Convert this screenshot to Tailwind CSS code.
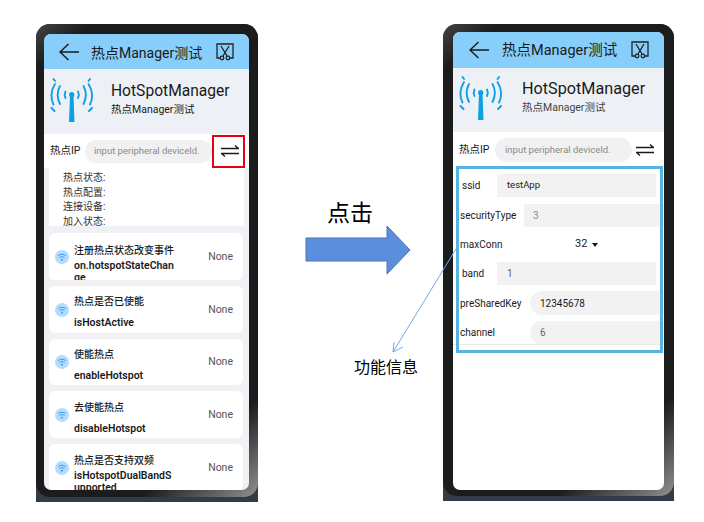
<!DOCTYPE html>
<html lang="en">
<head>
<meta charset="UTF-8">
<title>HotSpotManager</title>
<script src="https://cdn.jsdelivr.net/npm/@tailwindcss/browser@4"></script>
</head>
<body class="bg-white">
<div class="relative w-[704px] h-[522px] overflow-hidden bg-white font-['Roboto','Noto_Sans_CJK_SC',sans-serif] text-[#1a1a1a]">

  <!-- left phone -->
  <div class="absolute left-[36px] top-[24px] w-[222px] h-[478px] rounded-t-[14px] bg-[#333a48]">
    <div class="w-full h-[473px] rounded-[14px] pt-[10px] px-[8px] bg-[linear-gradient(140deg,#444_0%,#1c1c1c_7%,#1c1c1c_85%,#909090_100%)]">
      <div class="w-[205px] h-[456px] rounded-[7px] overflow-hidden bg-[#f1f1f5] flex flex-col">
        <div class="h-[35px] shrink-0 bg-[#87cefa] flex items-center">
          <svg class="ml-[15px] w-[20px] h-[18px]" viewBox="0 0 20 18" fill="none" stroke="#1a1a1a" stroke-width="1.400"><path d="M20 9H1M9.500 1 1 9l8.500 8"/></svg>
          <span class="ml-[12px] pt-[3px] text-[14px] leading-none whitespace-nowrap">热点Manager测试</span>
          <svg class="ml-auto mr-[15px] w-[18px] h-[18px]" viewBox="0 0 18 18" fill="none" stroke="#222" stroke-width="1.300"><path d="M5 15H1V1h16v14h-4"/><path d="M5 3l6 10M13 3 7 13"/><circle cx="6" cy="15" r="1.800"/><circle cx="12" cy="15" r="1.800"/></svg>
        </div>
        <div class="h-[65px] shrink-0 bg-[#edf1f5] flex items-center">
          <svg class="ml-[5px] w-[47px] h-[45px] -mt-[3px]" viewBox="0 0 47 45" fill="none" stroke="#0ea0e4" stroke-width="1.900" stroke-linecap="round"><path d="M21 18h3.500l1 26h-5.500z" fill="#0ea0e4" stroke="none"/><circle cx="22.700" cy="16.700" r="2.600" fill="#0ea0e4" stroke="none"/><path d="M16.500 13.500c-1 2-1 4.500 0 6.500M29 13.500c1 2 1 4.500 0 6.500"/><path d="M11 8c-3 5.500-3 12 0 18M34.500 8c3 5.500 3 12 0 18"/><path d="M6 6C1.500 13 1.500 21 4.500 26.500M39.500 6c4.500 7 4.500 15 1.500 20.500"/><path d="M4.500 1l1.500 2M41 1l-1.500 2M2.500 30l3 3M43 30l-3 3"/></svg>
          <div class="ml-[15px] -mt-[6px]">
            <div class="text-[15.600px] leading-[22px] whitespace-nowrap">HotSpotManager</div>
            <div class="text-[10.500px] leading-[16px] whitespace-nowrap">热点Manager测试</div>
          </div>
        </div>
        <div class="h-[34px] shrink-0 bg-white flex items-center">
          <span class="ml-[6px] w-[35px] text-[10.500px] whitespace-nowrap">热点IP</span>
          <div class="w-[127px] h-[23px] rounded-full bg-[#f1f1f1] flex items-center pl-[9px] text-[9.500px] text-[#8a8a8a] whitespace-nowrap">input peripheral deviceId.</div>
          <svg class="ml-[9px] w-[18px] h-[12px]" viewBox="0 0 18 12" fill="none" stroke="#1a1a1a" stroke-width="1.300"><path d="M0 3.500h17.500L14 .5M18 8.500H.5L4 11.500"/></svg>
        </div>
        <div class="mx-[5px] w-[195px] h-[58px] shrink-0 bg-white pl-[14px] pt-[3px] overflow-hidden text-[10px] leading-[14.500px] text-[#333]">
          <div>热点状态:</div>
          <div>热点配置:</div>
          <div>连接设备:</div>
          <div>加入状态:</div>
        </div>
        <div class="flex flex-col gap-[6px] mt-[7px] mx-[5px] w-[194px]">
          <div class="h-[47px] shrink-0 rounded-[6px] bg-white overflow-hidden flex items-center">
            <svg class="ml-[6px] shrink-0 w-[14px] h-[14px]" viewBox="0 0 14 14" fill="none"><circle cx="7" cy="7" r="7" fill="#b3dcff"/><path d="M3 5.800c2.400-2 5.600-2 8 0M4.500 7.600c1.500-1.200 3.500-1.200 5 0" stroke="#3b9bf5"/><circle cx="7" cy="9.700" r="1" fill="#3b9bf5"/></svg>
            <div class="ml-[5px] mr-[2px] w-[102px] h-[47px] shrink-0 overflow-hidden pt-[11px]">
              <div class="text-[10px] leading-[14px] font-medium whitespace-nowrap">注册热点状态改变事件</div>
              <div class="mt-[2px] text-[10.500px] leading-[12px] font-semibold break-all">on.hotspotStateChange</div>
            </div>
            <span class="ml-auto mr-[10px] text-[10.500px] text-[#555]">None</span>
          </div>
          <div class="h-[47px] shrink-0 rounded-[6px] bg-white overflow-hidden flex items-center">
            <svg class="ml-[6px] shrink-0 w-[14px] h-[14px]" viewBox="0 0 14 14" fill="none"><circle cx="7" cy="7" r="7" fill="#b3dcff"/><path d="M3 5.800c2.400-2 5.600-2 8 0M4.500 7.600c1.500-1.200 3.500-1.200 5 0" stroke="#3b9bf5"/><circle cx="7" cy="9.700" r="1" fill="#3b9bf5"/></svg>
            <div class="ml-[5px] mr-[2px] w-[102px] h-[47px] shrink-0 overflow-hidden pt-[9px]">
              <div class="text-[10px] leading-[14px] font-medium whitespace-nowrap">热点是否已使能</div>
              <div class="mt-[8px] text-[10.500px] leading-[12px] font-semibold break-all">isHostActive</div>
            </div>
            <span class="ml-auto mr-[10px] text-[10.500px] text-[#555]">None</span>
          </div>
          <div class="h-[46px] shrink-0 rounded-[6px] bg-white overflow-hidden flex items-center">
            <svg class="ml-[6px] shrink-0 w-[14px] h-[14px]" viewBox="0 0 14 14" fill="none"><circle cx="7" cy="7" r="7" fill="#b3dcff"/><path d="M3 5.800c2.400-2 5.600-2 8 0M4.500 7.600c1.500-1.200 3.500-1.200 5 0" stroke="#3b9bf5"/><circle cx="7" cy="9.700" r="1" fill="#3b9bf5"/></svg>
            <div class="ml-[5px] mr-[2px] w-[102px] h-[46px] shrink-0 overflow-hidden pt-[9px]">
              <div class="text-[10px] leading-[14px] font-medium whitespace-nowrap">使能热点</div>
              <div class="mt-[8px] text-[10.500px] leading-[12px] font-semibold break-all">enableHotspot</div>
            </div>
            <span class="ml-auto mr-[10px] text-[10.500px] text-[#555]">None</span>
          </div>
          <div class="h-[47px] shrink-0 rounded-[6px] bg-white overflow-hidden flex items-center">
            <svg class="ml-[6px] shrink-0 w-[14px] h-[14px]" viewBox="0 0 14 14" fill="none"><circle cx="7" cy="7" r="7" fill="#b3dcff"/><path d="M3 5.800c2.400-2 5.600-2 8 0M4.500 7.600c1.500-1.200 3.500-1.200 5 0" stroke="#3b9bf5"/><circle cx="7" cy="9.700" r="1" fill="#3b9bf5"/></svg>
            <div class="ml-[5px] mr-[2px] w-[102px] h-[47px] shrink-0 overflow-hidden pt-[10px]">
              <div class="text-[10px] leading-[14px] font-medium whitespace-nowrap">去使能热点</div>
              <div class="mt-[8px] text-[10.500px] leading-[12px] font-semibold break-all">disableHotspot</div>
            </div>
            <span class="ml-auto mr-[10px] text-[10.500px] text-[#555]">None</span>
          </div>
          <div class="h-[47px] shrink-0 rounded-[6px] bg-white overflow-hidden flex items-center">
            <svg class="ml-[6px] shrink-0 w-[14px] h-[14px]" viewBox="0 0 14 14" fill="none"><circle cx="7" cy="7" r="7" fill="#b3dcff"/><path d="M3 5.800c2.400-2 5.600-2 8 0M4.500 7.600c1.500-1.200 3.500-1.200 5 0" stroke="#3b9bf5"/><circle cx="7" cy="9.700" r="1" fill="#3b9bf5"/></svg>
            <div class="ml-[5px] mr-[2px] w-[102px] h-[47px] shrink-0 overflow-hidden pt-[10px]">
              <div class="text-[10px] leading-[14px] font-medium whitespace-nowrap">热点是否支持双频</div>
              <div class="mt-[2px] text-[10.500px] leading-[12px] font-semibold break-all">isHotspotDualBandSupported</div>
            </div>
            <span class="ml-auto mr-[10px] text-[10.500px] text-[#555]">None</span>
          </div>
        </div>
      </div>
    </div>
  </div>

  <!-- red highlight over the swap button -->
  <div class="absolute left-[212px] top-[135px] w-[33px] h-[33px] border-2 border-[#e60012]"></div>

  <!-- right phone -->
  <div class="absolute left-[443px] top-[24px] w-[231px] h-[477px] rounded-t-[14px] bg-[#333a48]">
    <div class="w-full h-[472px] rounded-[14px] pt-[8px] px-[10px] bg-[linear-gradient(140deg,#444_0%,#1c1c1c_7%,#1c1c1c_85%,#909090_100%)]">
      <div class="w-[211px] h-[458px] rounded-[7px] overflow-hidden bg-white flex flex-col">
        <div class="h-[36px] shrink-0 bg-[#87cefa] flex items-center">
          <svg class="ml-[16px] w-[20px] h-[18px]" viewBox="0 0 20 18" fill="none" stroke="#1a1a1a" stroke-width="1.400"><path d="M20 9H1M9.500 1 1 9l8.500 8"/></svg>
          <span class="ml-[13px] pt-[2px] text-[14.500px] leading-none whitespace-nowrap">热点Manager测试</span>
          <svg class="ml-auto mr-[15px] w-[18px] h-[18px]" viewBox="0 0 18 18" fill="none" stroke="#222" stroke-width="1.300"><path d="M5 15H1V1h16v14h-4"/><path d="M5 3l6 10M13 3 7 13"/><circle cx="6" cy="15" r="1.800"/><circle cx="12" cy="15" r="1.800"/></svg>
        </div>
        <div class="h-[64px] shrink-0 bg-[#edf1f5] flex items-center">
          <svg class="ml-[5px] w-[47px] h-[45px] -mt-[3px]" viewBox="0 0 47 45" fill="none" stroke="#0ea0e4" stroke-width="1.900" stroke-linecap="round"><path d="M21 18h3.500l1 26h-5.500z" fill="#0ea0e4" stroke="none"/><circle cx="22.700" cy="16.700" r="2.600" fill="#0ea0e4" stroke="none"/><path d="M16.500 13.500c-1 2-1 4.500 0 6.500M29 13.500c1 2 1 4.500 0 6.500"/><path d="M11 8c-3 5.500-3 12 0 18M34.500 8c3 5.500 3 12 0 18"/><path d="M6 6C1.500 13 1.500 21 4.500 26.500M39.500 6c4.500 7 4.500 15 1.500 20.500"/><path d="M4.500 1l1.500 2M41 1l-1.500 2M2.500 30l3 3M43 30l-3 3"/></svg>
          <div class="ml-[17px] -mt-[6px]">
            <div class="text-[16.200px] leading-[22px] whitespace-nowrap">HotSpotManager</div>
            <div class="text-[10.500px] leading-[16px] whitespace-nowrap text-[#444]">热点Manager测试</div>
          </div>
        </div>
        <div class="h-[36px] shrink-0 flex items-center">
          <span class="ml-[6px] w-[36px] text-[10.500px] whitespace-nowrap">热点IP</span>
          <div class="w-[137px] h-[24px] rounded-full bg-[#f1f1f1] flex items-center pl-[10px] text-[9.500px] text-[#8a8a8a] whitespace-nowrap">input peripheral deviceId.</div>
          <svg class="ml-[4px] w-[18px] h-[12px]" viewBox="0 0 18 12" fill="none" stroke="#1a1a1a" stroke-width="1.300"><path d="M0 3.500h17.500L14 .5M18 8.500H.5L4 11.500"/></svg>
        </div>
        <div class="h-[177px] shrink-0 border-b border-[#e8e8e8] pt-[6px] text-[10px] overflow-hidden">
          <div class="flex items-center h-[23px]">
            <span class="w-[44px] shrink-0 pl-[9px] whitespace-nowrap">ssid</span>
            <div class="w-[159px] h-[23px] bg-[#f2f2f2] flex items-center pl-[10px] text-[9.500px]">testApp</div>
          </div>
          <div class="flex items-center h-[23px] mt-[7px]">
            <span class="w-[71px] shrink-0 pl-[7px] whitespace-nowrap">securityType</span>
            <div class="flex-1 h-[23px] bg-[#f2f2f2] flex items-center pl-[9px] text-[#888]">3</div>
          </div>
          <div class="flex items-center h-[23px] mt-[6px]">
            <span class="w-[122px] shrink-0 pl-[7px] whitespace-nowrap">maxConn</span>
            <span class="text-[11px]">32</span>
            <svg class="ml-[5px] w-[6px] h-[4px]" viewBox="0 0 6 4"><path d="M0 0h6L3 4z" fill="#1a1a1a"/></svg>
          </div>
          <div class="flex items-center h-[23px] mt-[6px]">
            <span class="w-[44px] shrink-0 pl-[9px] whitespace-nowrap">band</span>
            <div class="w-[159px] h-[23px] bg-[#f2f2f2] flex items-center pl-[10px] text-[#666]">1</div>
          </div>
          <div class="flex items-center h-[24px] mt-[6px]">
            <span class="w-[77px] shrink-0 pl-[7px] whitespace-nowrap">preSharedKey</span>
            <div class="w-[160px] shrink-0 h-[24px] rounded-full bg-[#f2f2f2] flex items-center pl-[10px]">12345678</div>
          </div>
          <div class="flex items-center h-[23px] mt-[6px]">
            <span class="w-[77px] shrink-0 pl-[7px] whitespace-nowrap">channel</span>
            <div class="w-[160px] shrink-0 h-[23px] rounded-full bg-[#f2f2f2] flex items-center pl-[10px] text-[#666]">6</div>
          </div>
        </div>
      </div>
    </div>
  </div>

  <!-- annotations -->
  <div class="absolute left-[456px] top-[166px] w-[207px] h-[187px] border-[3px] border-[#56b4e3]"></div>
  <div class="absolute left-[327px] top-[198px] text-[23px] leading-[32px] text-black whitespace-nowrap">点击</div>
  <svg class="absolute left-[305px] top-[225px] w-[106px] h-[50px]" viewBox="0 0 106 50"><path d="M1 13h81V1l23 24-23 24V36H1z" fill="#5b8fde" stroke="#4a76b5"/></svg>
  <svg class="absolute left-[385px] top-[240px] w-[80px] h-[120px]" viewBox="0 0 80 120" fill="none" stroke="#7aa5e8"><path d="M74 4 8 112M9 102l-1 10 10-5"/></svg>
  <div class="absolute left-[354px] top-[356px] text-[16px] leading-[23px] text-black whitespace-nowrap">功能信息</div>
</div>
</body>
</html>
